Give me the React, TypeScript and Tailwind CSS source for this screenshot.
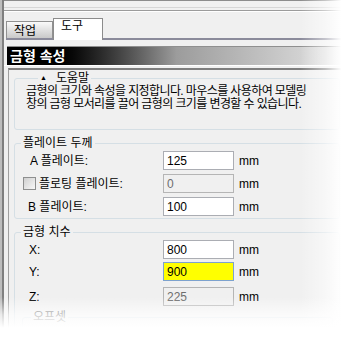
const font = "font-['Liberation_Sans','Noto_Sans_CJK_KR',sans-serif]";

function Field({ value, kind }: { value: string; kind?: 'off' | 'hl' }) {
  const look =
    kind === 'off'
      ? 'bg-[#f0f0f0] border-[#b5b5b5] text-[#6d6d6d]'
      : kind === 'hl'
        ? 'bg-[#ffff00] border-[#7da2ce] text-black'
        : 'bg-white border-[#abadb3] text-black';
  return (
    <div className="flex items-center">
      <input
        readOnly
        disabled={kind === 'off'}
        value={value}
        className={`w-[71px] h-[19px] border px-[3px] text-[12px] outline-none ${look}`}
      />
      <span className="ml-[5px] text-[12px]">mm</span>
    </div>
  );
}

function Row({ label, pad, value, kind, check }: { label: string; pad: string; value: string; kind?: 'off' | 'hl'; check?: boolean }) {
  return (
    <div className="flex items-center h-[19px]">
      <div className={`w-[148px] flex items-center text-[12px] ${pad}`}>
        {check && (
          <span className="w-[13px] h-[13px] mr-[3px] border border-[#8e8f8f] bg-linear-to-br from-[#d0d0d0] to-[#f8f8f8]" />
        )}
        {label}
      </div>
      <Field value={value} kind={kind} />
    </div>
  );
}

export default function App() {
  return (
    <div className={`relative w-[346px] h-[341px] overflow-hidden bg-[#f0f0f0] text-black flex ${font}`}>
      <div className="w-[4px] shrink-0 border-l-2 border-[#bdbdbd] bg-[#7f7f7f]" />
      <div className="flex-1 min-w-0">
        <div className="h-px bg-[#8c8c8c]" />
        <div className="h-[6px]" />
        <div className="h-px bg-[#d6d6d6]" />
        <div className="h-[2px]" />
        <div className="h-px bg-[#9c9c9c]" />
        <div className="h-px bg-white" />
        <div className="h-[6px]" />

        {/* tabs */}
        <div className="flex items-end h-[22px] ml-[2px] border-b-2 border-[#8b8b9b]">
          <div className="w-[47px] h-[17px] pl-[7px] pt-[2px] text-[12px] leading-[14px] border border-b-0 border-[#919191] bg-linear-to-b from-[#fafafa] to-[#c9c9c9]">
            작업
          </div>
          <div className="w-[50px] h-[22px] -mb-[2px] pl-[7px] text-[12px] leading-[14px] border border-b-0 border-[#8c8c8c] bg-white">
            도구
          </div>
        </div>

        <div className="h-[6px]" />

        {/* header bar */}
        <div className="ml-[3px] border-t border-[#8f8f8f]">
          <div className="h-[18px] pl-[3px] flex items-center text-[14px] font-bold text-white bg-linear-to-r from-black from-[12%] via-[#9c9c9c] via-[50%] to-[#e6e6e6]">
            금형 속성
          </div>
        </div>
        <div className="h-px bg-white" />
        <div className="h-[2px]" />

        {/* panel */}
        <div className="ml-[4px] h-[300px] border-l border-l-[#a0a0a0] border-t-2 border-t-[#7e7e7e] flex flex-col">
          <fieldset className="shrink-0 mt-[2px] ml-[5px] mr-[6px] border border-[#d5dfe5] rounded-[3px] pl-[11px] pb-[18px]">
            <legend className="ml-[12px] px-[2px] h-[12px] flex items-center text-[12px] leading-[12px]">
              <span className="w-[16px] text-[7px] leading-[8px]">▲</span>
              <span>도움말</span>
            </legend>
            <div className="mt-[1px] text-[12px] leading-[13px] tracking-[-0.6px]">
              <p>금형의 크기와 속성을 지정합니다. 마우스를 사용하여 모델링</p>
              <p>창의 금형 모서리를 끌어 금형의 크기를 변경할 수 있습니다.</p>
            </div>
          </fieldset>

          <fieldset className="shrink-0 mt-[7px] ml-[5px] mr-[6px] border border-[#d5dfe5] rounded-[3px] pt-[2px] pb-[2px] flex flex-col gap-[4px]">
            <legend className="ml-[6px] px-[2px] text-[12px] leading-[12px]">플레이트 두께</legend>
            <Row label="A 플레이트:" pad="pl-[15px]" value="125" />
            <Row label="플로팅 플레이트:" pad="pl-[8px]" value="0" kind="off" check />
            <Row label="B 플레이트:" pad="pl-[13px]" value="100" />
          </fieldset>

          <fieldset className="shrink-0 mt-[7px] ml-[5px] mr-[6px] border border-[#d5dfe5] rounded-[3px] pt-[2px] flex flex-col">
            <legend className="ml-[6px] px-[2px] text-[12px] leading-[12px]">금형 치수</legend>
            <Row label="X:" pad="pl-[14px]" value="800" />
            <div className="mt-[3px]">
              <Row label="Y:" pad="pl-[14px]" value="900" kind="hl" />
            </div>
            <div className="mt-[6px]">
              <Row label="Z:" pad="pl-[14px]" value="225" kind="off" />
            </div>
            <fieldset className="mt-[5px] ml-[7px] mr-[6px] h-[40px] border border-[#d5dfe5] rounded-[3px]">
              <legend className="ml-[8px] px-[2px] text-[12px] leading-[12px] text-[#555]">오프셋</legend>
            </fieldset>
          </fieldset>
        </div>
      </div>

      {/* soft edge fades */}
      <div className="absolute top-0 right-0 h-full w-[46px] bg-linear-to-r from-transparent via-white/50 via-[55%] to-white to-[90%]" />
      <div className="absolute left-0 bottom-0 w-full h-[44px] bg-linear-to-b from-transparent via-white/70 via-[40%] to-white to-[70%]" />
    </div>
  );
}
